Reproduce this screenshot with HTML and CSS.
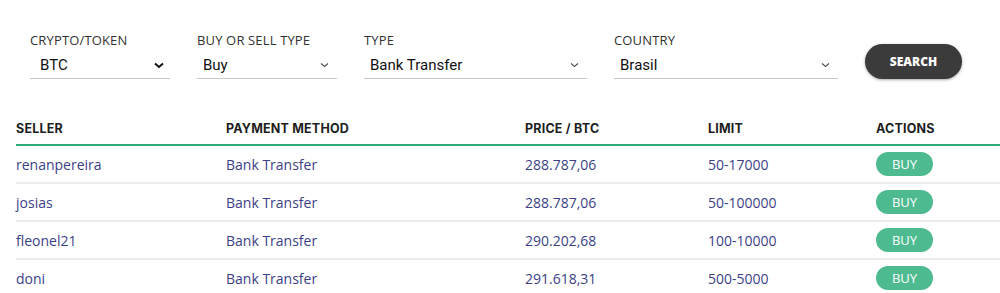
FILE: index.html
```html
<!DOCTYPE html>
<html>
<head>
<meta charset="utf-8">
<link rel="stylesheet" href="styles.css">
</head>
<body>
<div class="filters">
  <div class="field f-crypto">
    <div class="label">CRYPTO/TOKEN</div>
    <div class="select">
      <span>BTC</span>
      <svg class="chev bold" width="10" height="7" viewBox="0 0 10 7"><path d="M1 1.5 L5 5 L9 1.5" fill="none" stroke="#111" stroke-width="2"/></svg>
    </div>
  </div>
  <div class="field f-type">
    <div class="label">BUY OR SELL TYPE</div>
    <div class="select">
      <span>Buy</span>
      <svg class="chev" width="9" height="6" viewBox="0 0 9 6"><path d="M1 1.5 L4.5 4.5 L8 1.5" fill="none" stroke="#555" stroke-width="1.2"/></svg>
    </div>
  </div>
  <div class="field f-method">
    <div class="label">TYPE</div>
    <div class="select">
      <span>Bank Transfer</span>
      <svg class="chev" width="9" height="6" viewBox="0 0 9 6"><path d="M1 1.5 L4.5 4.5 L8 1.5" fill="none" stroke="#555" stroke-width="1.2"/></svg>
    </div>
  </div>
  <div class="field f-country">
    <div class="label">COUNTRY</div>
    <div class="select">
      <span>Brasil</span>
      <svg class="chev" width="9" height="6" viewBox="0 0 9 6"><path d="M1 1.5 L4.5 4.5 L8 1.5" fill="none" stroke="#555" stroke-width="1.2"/></svg>
    </div>
  </div>
  <button class="search">SEARCH</button>
</div>

<div class="table">
  <div class="row head">
    <div>SELLER</div><div>PAYMENT METHOD</div><div>PRICE / BTC</div><div>LIMIT</div><div>ACTIONS</div>
  </div>
  <div class="row">
    <div>renanpereira</div><div>Bank Transfer</div><div>288.787,06</div><div>50-17000</div><div><span class="buy">BUY</span></div>
  </div>
  <div class="row">
    <div>josias</div><div>Bank Transfer</div><div>288.787,06</div><div>50-100000</div><div><span class="buy">BUY</span></div>
  </div>
  <div class="row">
    <div>fleonel21</div><div>Bank Transfer</div><div>290.202,68</div><div>100-10000</div><div><span class="buy">BUY</span></div>
  </div>
  <div class="row">
    <div>doni</div><div>Bank Transfer</div><div>291.618,31</div><div>500-5000</div><div><span class="buy">BUY</span></div>
  </div>
</div>
</body>
</html>
```

FILE: styles.css
```css
html, body {
  margin: 0;
  padding: 0;
  background: #fff;
  overflow: hidden;
}
body {
  font-family: "Open Sans", "Liberation Sans", sans-serif;
  color: #333;
}
.filters {
  display: flex;
  align-items: flex-end;
  gap: 27px;
  padding: 30px 0 0 30px;
  height: 49px;
}
.field {
  display: flex;
  flex-direction: column;
}
.f-crypto, .f-type { width: 140px; }
.f-method { width: 223px; }
.f-country { width: 224px; }
.label {
  font-size: 13px;
  line-height: 18px;
  color: #333;
  letter-spacing: 0.15px;
}
.select {
  margin-top: 3px;
  height: 26px;
  border-bottom: 1px solid #c8c8c8;
  display: flex;
  align-items: center;
  justify-content: space-between;
  padding: 0 6px 0 10px;
  font-family: Roboto, "Liberation Sans", sans-serif;
  font-size: 15px;
  color: #111;
}
.f-type .select, .f-method .select, .f-country .select { padding-left: 6px; padding-right: 8px; }
.chev { display: block; }
.search {
  width: 97px;
  height: 35px;
  margin-bottom: 0;
  border: none;
  border-radius: 18px;
  background: #3b3b3b;
  color: #fff;
  font-family: "Open Sans", "Liberation Sans", sans-serif;
  font-weight: 800;
  font-size: 12px;
  box-shadow: 0 1px 3px rgba(0,0,0,0.35);
  padding: 0;
}
.table {
  margin: 33px 0 0 16px;
}
.row {
  display: grid;
  grid-template-columns: 210px 299px 183px 168px 1fr;
  align-items: center;
  height: 36px;
  border-bottom: 2px solid #ececec;
  font-size: 14px;
  color: #3b3f87;
}
.row.head {
  height: 32px;
  border-bottom: 2px solid #2fab7a;
  font-family: Inter, "Liberation Sans", sans-serif;
  font-weight: 700;
  font-size: 12.5px;
  color: #1e1e1e;
  letter-spacing: 0.2px;
}
.buy {
  display: inline-flex;
  align-items: center;
  justify-content: center;
  width: 57px;
  height: 24px;
  border-radius: 12px;
  background: #4dbb8f;
  color: #fff;
  font-size: 13px;
}
```
